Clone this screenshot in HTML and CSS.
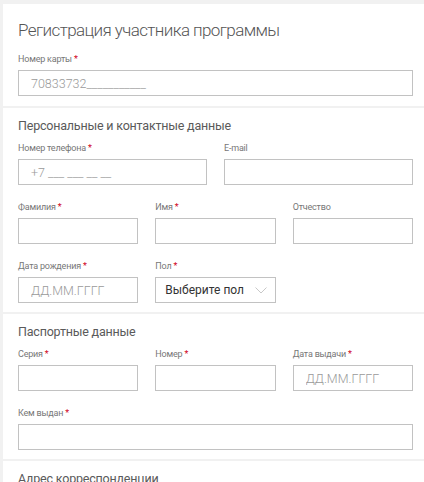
FILE: index.html
```html
<!DOCTYPE html>
<html lang="ru">
<head>
<meta charset="utf-8">
<title>Регистрация участника программы</title>
<link rel="stylesheet" href="styles.css">
</head>
<body>
<main class="page">
  <section class="section first">
    <h1 class="page-title">Регистрация участника программы</h1>
    <div class="field">
      <label class="label">Номер карты <span class="req">*</span></label>
      <input class="input" type="text" placeholder="70833732___________">
    </div>
  </section>

  <section class="section">
    <h2 class="section-title">Персональные и контактные данные</h2>
    <div class="grid cols-2">
      <div class="field">
        <label class="label">Номер телефона <span class="req">*</span></label>
        <input class="input" type="text" placeholder="+7 ___ ___ __ __">
      </div>
      <div class="field">
        <label class="label">E-mail</label>
        <input class="input" type="text">
      </div>
    </div>
    <div class="grid cols-3">
      <div class="field">
        <label class="label">Фамилия <span class="req">*</span></label>
        <input class="input" type="text">
      </div>
      <div class="field">
        <label class="label">Имя <span class="req">*</span></label>
        <input class="input" type="text">
      </div>
      <div class="field">
        <label class="label">Отчество</label>
        <input class="input" type="text">
      </div>
    </div>
    <div class="grid cols-3">
      <div class="field">
        <label class="label">Дата рождения <span class="req">*</span></label>
        <input class="input" type="text" placeholder="ДД.ММ.ГГГГ">
      </div>
      <div class="field">
        <label class="label">Пол <span class="req">*</span></label>
        <div class="select">
          <span class="select-text">Выберите пол</span>
          <svg class="chevron" width="12" height="7" viewBox="0 0 12 7"><path d="M0.5 0.5 L6 6 L11.5 0.5" fill="none" stroke="#c8c8c8" stroke-width="1"/></svg>
        </div>
      </div>
    </div>
  </section>

  <section class="section">
    <h2 class="section-title">Паспортные данные</h2>
    <div class="grid cols-3">
      <div class="field">
        <label class="label">Серия <span class="req">*</span></label>
        <input class="input" type="text">
      </div>
      <div class="field">
        <label class="label">Номер <span class="req">*</span></label>
        <input class="input" type="text">
      </div>
      <div class="field">
        <label class="label">Дата выдачи <span class="req">*</span></label>
        <input class="input" type="text" placeholder="ДД.ММ.ГГГГ">
      </div>
    </div>
    <div class="grid">
      <div class="field">
        <label class="label">Кем выдан <span class="req">*</span></label>
        <input class="input" type="text">
      </div>
    </div>
  </section>

  <section class="section">
    <h2 class="section-title">Адрес корреспонденции</h2>
  </section>
</main>
</body>
</html>
```

FILE: styles.css
```css
html, body {
  margin: 0;
  padding: 0;
}
body {
  background: #f1f1f1;
  font-family: Roboto, "Noto Sans", "Liberation Sans", sans-serif;
  color: #555;
}
.page {
  padding: 4px 0 0 3px;
  display: flex;
  flex-direction: column;
  gap: 2px;
}
.section {
  background: #fff;
  padding: 9px 11px 9px 15px;
  display: flex;
  flex-direction: column;
  gap: 16px;
}
.section.first {
  padding-bottom: 10px;
  gap: 11px;
}
.page-title {
  margin: 5px 0 0;
  font-size: 17px;
  line-height: 24px;
  font-weight: 300;
  letter-spacing: -0.6px;
  color: #555;
}
.section-title {
  margin: 0 0 -9px;
  font-size: 12.5px;
  line-height: 18px;
  font-weight: 400;
  letter-spacing: -0.2px;
  color: #5a5a5a;
}
.grid {
  display: grid;
  grid-template-columns: 1fr;
  column-gap: 17px;
}
.grid.cols-2 { grid-template-columns: 1fr 1fr; }
.grid.cols-3 { grid-template-columns: 1fr 1fr 1fr; }
.field {
  display: flex;
  flex-direction: column;
  gap: 5px;
  min-width: 0;
}
.label {
  font-size: 9px;
  line-height: 12px;
  letter-spacing: -0.2px;
  color: #777;
}
.req {
  color: #d0021b;
}
.input {
  box-sizing: border-box;
  width: 100%;
  height: 26px;
  margin: 0;
  border: 1px solid #c2c2c2;
  border-radius: 0;
  background: #fff;
  padding: 0 12px;
  font-family: Roboto, "Noto Sans", "Liberation Sans", sans-serif;
  font-size: 12.5px;
  font-weight: 300;
  color: #333;
  outline: none;
}
.input::placeholder {
  color: #9a9a9a;
  opacity: 1;
}
.select {
  box-sizing: border-box;
  height: 26px;
  border: 1px solid #c2c2c2;
  background: #fff;
  padding: 0 8px 0 9px;
  display: flex;
  align-items: center;
  justify-content: space-between;
}
.select-text {
  font-size: 12px;
  color: #333;
}
.chevron {
  display: block;
  margin-top: 1px;
}
```
